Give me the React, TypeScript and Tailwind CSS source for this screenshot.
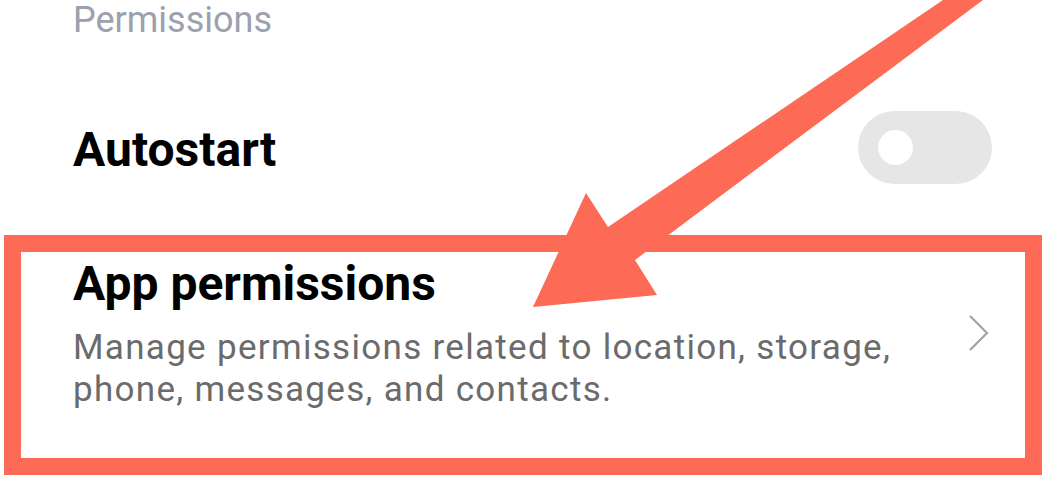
import React from "react";

export default function App() {
  return (
    <div
      className="relative w-[1048px] h-[479px] overflow-hidden bg-white"
      style={{ fontFamily: "Roboto, 'Noto Sans', sans-serif" }}
    >
      <div className="pl-[73px] text-[36px] leading-[40px] text-[#9ba1ad]">Permissions</div>

      <div className="mt-[83px] h-[54px] flex items-center pl-[73px] pr-[56px]">
        <div className="flex-1 text-[48px] leading-[54px] font-bold text-black">Autostart</div>
        <div className="mb-[5px] w-[134px] h-[73px] rounded-full bg-[#e6e6e6] flex items-center pl-[20px]">
          <div className="w-[35px] h-[35px] rounded-full bg-white" />
        </div>
      </div>

      <div className="mt-[58px] ml-[4px] mr-[6px] h-[240px] border-[17px] border-[#fd6b57] flex pl-[52px] pr-[34px] pt-[5px]">
        <div className="flex-1">
          <div className="text-[48px] leading-[54px] font-bold text-black">App permissions</div>
          <div className="mt-[16px] w-[860px] text-[35px] leading-[42px] tracking-[1.3px] text-[#6b6b6b]">
            Manage permissions related to location, storage, phone, messages, and contacts.
          </div>
        </div>
        <svg className="mt-[56px]" width="24" height="40" viewBox="0 0 24 40" fill="none">
          <path d="M3 3 L20 20 L3 37" stroke="#a3a3a3" strokeWidth="2.2" />
        </svg>
      </div>

      <svg className="absolute inset-0 pointer-events-none" width="1048" height="479" viewBox="0 0 1048 479">
        <polygon
          points="943,0 608,227 586,193 533,307 657,295 635,260 983,0"
          fill="#fd6b57"
        />
      </svg>
    </div>
  );
}
